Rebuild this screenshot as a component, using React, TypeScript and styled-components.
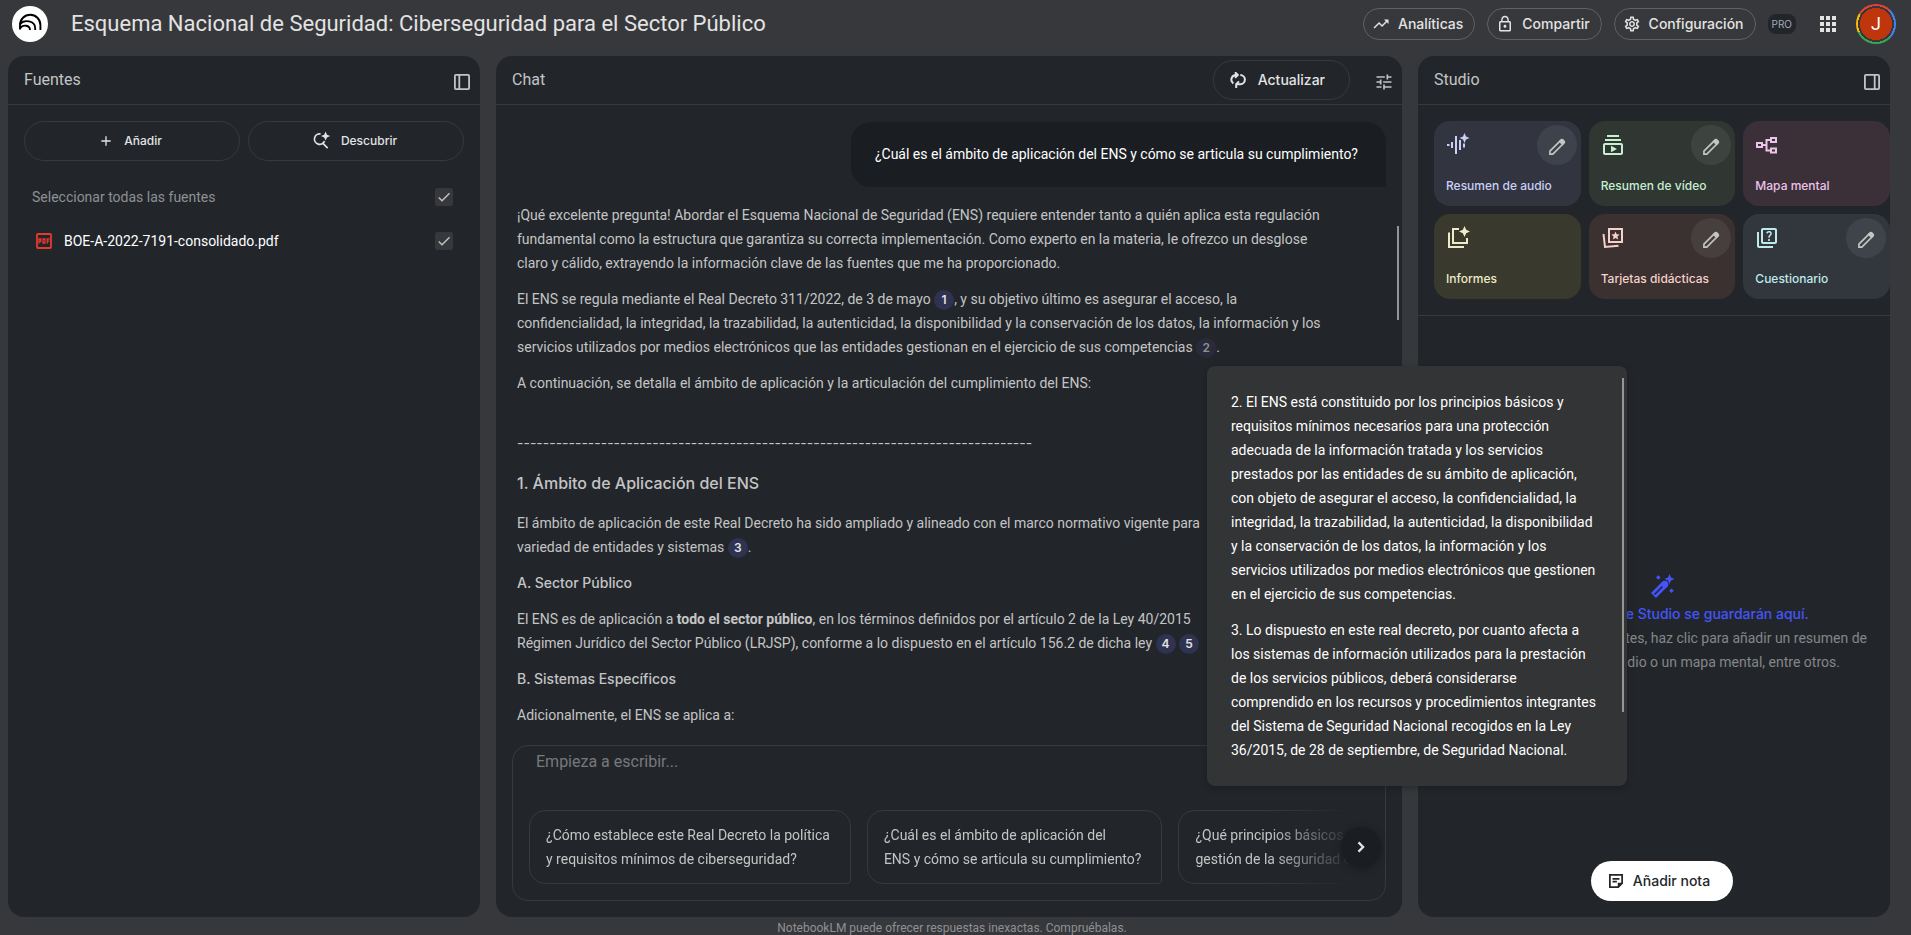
import React from "react";
import styled, { createGlobalStyle } from "styled-components";
import {
  MdAdd, MdApps, MdCheck, MdLockOutline, MdOutlineQuiz,
  MdOutlineSettings, MdOutlineSubscriptions, MdTrendingUp, MdTune,
} from "react-icons/md";

const c = {
  page: "#37383b",
  panel: "#22262b",
  deep: "#1a1e22",
  line: "#37393c",
  outline: "#5f6165",
  text: "#e3e3e3",
  body: "#c4c4c4",
  muted: "#8e9194",
};

const labelFont = `Inter, "Liberation Sans", sans-serif`;

const Global = createGlobalStyle`
  *, *::before, *::after { box-sizing: border-box; }
  html, body, #root { height: 100%; }
  body {
    margin: 0;
    background: ${c.page};
    color: ${c.text};
    font: 400 14px/24px Roboto, "Liberation Sans", sans-serif;
    overflow: hidden;
  }
  button, input, textarea { font: inherit; color: inherit; }
  button { cursor: pointer; }
  h1, h2, h3, h4, p { margin: 0; padding: 0; }
  svg { display: block; flex: none; }
`;

/* ---------- layout ---------- */

const Page = styled.div`
  display: flex;
  flex-direction: column;
  height: 100%;
`;

const TopBar = styled.header`
  display: flex;
  align-items: center;
  gap: 12px;
  height: 56px;
  padding: 0 15px 8px 12px;
`;

const Title = styled.h1`
  flex: 1;
  margin-left: 11px;
  font-size: 22px;
  font-weight: 400;
  line-height: 32px;
  white-space: nowrap;
`;

const Columns = styled.main`
  flex: 1;
  min-height: 0;
  display: grid;
  grid-template-columns: 236fr 453fr 236fr;
  gap: 16px;
  padding: 0 21px 0 8px;
`;

const Panel = styled.section`
  position: relative;
  display: flex;
  flex-direction: column;
  min-width: 0;
  min-height: 0;
  background: ${c.panel};
  border-radius: 16px;
`;

const PanelHeader = styled.div`
  display: flex;
  align-items: center;
  gap: 24px;
  height: 49px;
  padding: 0 8px 0 16px;
  border-bottom: 1px solid ${c.line};
`;

const PanelTitle = styled.h2`
  flex: 1;
  font-size: 16px;
  font-weight: 400;
  line-height: 24px;
  color: ${c.body};
`;

const Footer = styled.footer`
  height: 18px;
  font-size: 12px;
  line-height: 22px;
  text-align: center;
  color: ${c.muted};
  padding-right: 7px;
`;

/* ---------- controls ---------- */

const Pill = styled.button<{ $tall?: boolean }>`
  display: flex;
  align-items: center;
  justify-content: center;
  gap: ${(p) => (p.$tall ? 12 : 8)}px;
  height: ${(p) => (p.$tall ? 40 : 32)}px;
  padding: ${(p) => (p.$tall ? "0 24px 0 16px" : "0 11px 0 8px")};
  flex: none;
  border: 1px solid ${(p) => (p.$tall ? c.line : c.outline)};
  border-radius: 20px;
  background: none;
  font-family: ${labelFont};
  font-weight: 500;
  white-space: nowrap;
`;

const SourceButton = styled(Pill)`
  flex: 1 1 0;
  gap: 10px;
  padding: 0 20px 0 16px;
  font-size: 12px;
`;

const IconButton = styled.button`
  display: grid;
  place-items: center;
  width: 20px;
  height: 20px;
  margin-top: 4px;
  padding: 0;
  border: 0;
  background: none;
  color: ${c.body};
`;

const AppsButton = styled(IconButton)`
  width: 40px;
  height: 40px;
  margin: 0;
  color: ${c.text};
`;

const Tools = styled.div`
  display: flex;
  align-items: center;
`;

const ProBadge = styled.span`
  margin-right: 12px;
  padding: 0 4px;
  border-radius: 8px;
  background: ${c.panel};
  color: #a0aab8;
  font-family: ${labelFont};
  font-size: 10px;
  line-height: 20px;
`;

const Avatar = styled.button`
  display: grid;
  place-items: center;
  width: 40px;
  height: 40px;
  margin-left: 8px;
  padding: 4px;
  border: 0;
  border-radius: 50%;
  background:
    radial-gradient(circle, #bf360c 0 16px, ${c.page} 16px 18px, transparent 18px),
    conic-gradient(#ea4335 0 45deg, #4285f4 45deg 135deg, #34a853 135deg 245deg, #fbbc04 245deg 300deg, #ea4335 300deg);
  color: #fff;
  font-size: 18px;
`;

/* ---------- sources ---------- */

const SourceActions = styled.div`
  display: flex;
  gap: 8px;
  padding: 16px 16px 14px;
`;

const SourceRow = styled.label<{ $dim?: boolean }>`
  display: flex;
  align-items: center;
  gap: 12px;
  height: 44px;
  padding: 0 27px 0 ${(p) => (p.$dim ? 24 : 28)}px;
  color: ${(p) => (p.$dim ? c.muted : "#fff")};
`;

const RowName = styled.span`
  flex: 1;
`;

const CheckWrap = styled.span`
  position: relative;
  width: 18px;
  height: 18px;
  svg { position: absolute; inset: 1px; pointer-events: none; color: ${c.body}; }
`;

const CheckInput = styled.input`
  appearance: none;
  display: block;
  width: 18px;
  height: 18px;
  margin: 0;
  border-radius: 2px;
  background: ${c.page};
`;

/* ---------- chat ---------- */

const Messages = styled.div`
  flex: 1;
  min-height: 0;
  overflow: hidden;
  padding: 17px 16px 0;
`;

const Question = styled.div`
  width: fit-content;
  margin-left: auto;
  padding: 20px 28px 21px 24px;
  border-radius: 20px 20px 0 20px;
  background: ${c.deep};
  color: #fff;
`;

const Answer = styled.article`
  display: flex;
  flex-direction: column;
  gap: 12px;
  padding: 16px 5px 0;
  color: ${c.body};
  white-space: nowrap;
  h3, h4 { font-family: ${labelFont}; font-weight: 500; }
  h3 { font-size: 16px; padding: 4px 0; }
  h4 { font-size: 14px; }
`;

const Rule = styled.p`
  padding: 24px 0 0;
  font-family: ${labelFont};
`;

const Cite = styled.button<{ $active?: boolean }>`
  width: 20px;
  height: 20px;
  padding: 0;
  border: 0;
  border-radius: 50%;
  background: ${(p) => (p.$active ? "#292b3a" : "#2f3250")};
  color: ${(p) => (p.$active ? c.muted : c.text)};
  font-family: ${labelFont};
  font-size: 12px;
  font-weight: 600;
  line-height: 20px;
`;

const Thumb = styled.span`
  position: absolute;
  width: 2px;
  background: #959595;
`;

const ChatThumb = styled(Thumb)`
  right: 3px;
  top: 170px;
  height: 94px;
`;

const Composer = styled.form`
  position: relative;
  margin: 0 16px 16px;
  height: 156px;
  border: 1px solid ${c.line};
  border-radius: 16px;
  padding: 4px 4px 16px 16px;
  display: flex;
  flex-direction: column;
`;

const Prompt = styled.textarea`
  display: block;
  height: 60px;
  padding: 0 7px;
  border: 0;
  outline: 0;
  resize: none;
  background: none;
  font-size: 16px;
  line-height: 24px;
  &::placeholder { color: #77797b; opacity: 1; }
`;

const Suggestions = styled.div`
  display: flex;
  gap: 16px;
  overflow: hidden;
  mask-image: linear-gradient(90deg, #000 calc(100% - 112px), transparent calc(100% - 28px));
`;

const Suggestion = styled.button`
  flex: none;
  height: 74px;
  padding: 0 20px 0 16px;
  border: 1px solid ${c.line};
  border-radius: 16px 16px 4px 16px;
  background: none;
  color: ${c.body};
  text-align: left;
  white-space: nowrap;
`;

const NextButton = styled.button`
  position: absolute;
  right: 4px;
  bottom: 33px;
  display: grid;
  place-items: center;
  width: 40px;
  height: 40px;
  padding: 0;
  border: 0;
  border-radius: 50%;
  background: ${c.deep};
  box-shadow: 0 2px 8px rgba(0, 0, 0, 0.3);
`;

const Popover = styled.aside`
  position: absolute;
  z-index: 2;
  left: 711px;
  top: 310px;
  width: 420px;
  height: 420px;
  padding: 24px;
  display: flex;
  flex-direction: column;
  gap: 12px;
  border-radius: 8px;
  background: #333435;
  box-shadow: 0 2px 6px rgba(0, 0, 0, 0.25);
  color: #fff;
  white-space: nowrap;
`;

const PopoverThumb = styled(Thumb)`
  right: 3px;
  top: 12px;
  height: 334px;
`;

/* ---------- studio ---------- */

const Tiles = styled.div`
  display: grid;
  grid-template-columns: repeat(3, 1fr);
  gap: 8px;
  padding: 16px 0 16px 16px;
  border-bottom: 1px solid ${c.line};
`;

const Tile = styled.div<{ $bg: string; $fg: string }>`
  display: grid;
  grid-template-columns: 1fr auto;
  height: 85px;
  padding: 4px 4px 8px 12px;
  border-radius: 16px;
  background: ${(p) => p.$bg};
  color: ${(p) => p.$fg};
`;

const TileIcon = styled.span`
  margin-top: 8px;
`;

const TileName = styled.button`
  grid-column: 1 / -1;
  align-self: end;
  padding: 0;
  border: 0;
  background: none;
  color: inherit;
  font-family: ${labelFont};
  font-size: 12px;
  font-weight: 500;
  line-height: 24px;
  text-align: left;
`;

const EditButton = styled.button`
  display: grid;
  place-items: center;
  width: 40px;
  height: 40px;
  padding: 4px 0 0;
  border: 0;
  border-radius: 50%;
  background: rgba(128, 134, 139, 0.16);
  color: ${c.body};
`;

const Empty = styled.div`
  flex: 1;
  display: flex;
  flex-direction: column;
  align-items: center;
  padding-top: 258px;
  padding-left: 16px;
  text-align: center;
  color: #848688;
  white-space: nowrap;
`;

const EmptyTitle = styled.p`
  margin-top: 3px;
  color: #4355fa;
  font-family: ${labelFont};
  font-weight: 500;
`;

const NoteButton = styled.button`
  display: flex;
  align-items: center;
  gap: 10px;
  align-self: center;
  height: 40px;
  margin: 0 0 16px 16px;
  padding: 0 23px 0 18px;
  border: 0;
  border-radius: 20px;
  background: #fff;
  color: ${c.panel};
  font-family: ${labelFont};
  font-weight: 500;
`;

/* ---------- drawings ---------- */

const star = (x: number, y: number, r: number) =>
  `M${x} ${y - r}l${r * 0.3} ${r * 0.7}l${r * 0.7} ${r * 0.3}l${-r * 0.7} ${r * 0.3}l${-r * 0.3} ${r * 0.7}l${-r * 0.3} ${-r * 0.7}l${-r * 0.7} ${-r * 0.3}l${r * 0.7} ${-r * 0.3}z`;

type Draw = { size?: number; children: React.ReactNode };
const Stroke = ({ size = 24, children }: Draw) => (
  <svg width={size} height={size} viewBox="0 0 24 24" fill="none" stroke="currentColor" strokeWidth="2" aria-hidden="true">
    {children}
  </svg>
);

const Logo = () => (
  <svg width="36" height="36" viewBox="0 0 36 36" aria-hidden="true">
    <circle cx="18" cy="18" r="18" fill="#fff" />
    <g fill="none" stroke="#000" strokeWidth="1.9">
      <path d="M8 23.5V19a10.2 10.2 0 0 1 20.4 0v5" />
      <path d="M8 18.2c4-5.2 15.2-3.6 15.2 4V24" />
      <path d="M8 22.5c3-4.6 10-3.3 10 1.5" />
    </g>
  </svg>
);

const PanelIcon = ({ right }: { right?: boolean }) => (
  <svg width="16" height="16" viewBox="0 0 16 16" fill="none" stroke="currentColor" strokeWidth="1.8" aria-hidden="true">
    <rect x="0.9" y="0.9" width="14.2" height="14.2" rx="1" />
    <path d={right ? "M10.7 1v14" : "M5.3 1v14"} />
  </svg>
);

const DiscoverIcon = () => (
  <Stroke size={20}>
    <path d="M11.5 3.5a6.3 6.3 0 1 0 4.8 8.5M13.5 14l6.500 6.500" />
    <path d={star(17.5, 6, 5.5)} fill="currentColor" stroke="none" />
  </Stroke>
);

const RefreshIcon = () => (
  <svg width="16" height="16" viewBox="0 0 16 16" fill="none" stroke="currentColor" strokeWidth="2" aria-hidden="true">
    <path d="M3.400 11.500A4.700 4.700 0 0 1 5.400 3H7M5 .2 7.800 3 5 5.800" />
    <path d="M10.300 3a4.600 4.600 0 0 1 0 9.200H6M9 9.400 6.200 12.200V16" />
  </svg>
);

const PdfIcon = () => (
  <svg width="16" height="16" viewBox="0 0 16 16" fill="none" stroke="#e8392f" aria-hidden="true">
    <rect x="1" y="1" width="14" height="14" rx="1" strokeWidth="1.8" />
    <path strokeWidth="1.3" d="M3 10.500V6h1.800v2.500H3M7 6v4h1.900V6zM11.300 10.500V6h2.200M11.300 8.200h2" />
  </svg>
);

const AudioIcon = () => (
  <Stroke>
    <path d="M1 12h2.500M6 9v6M10 3v18M14 7v10M18 10.500v4" />
    <path d={star(18.5, 5, 5)} fill="currentColor" stroke="none" />
  </Stroke>
);

const MindIcon = () => (
  <Stroke>
    <path d="M2 10h5v4H2zM16 5h5v4h-5zM16 15.500h5v4h-5zM7 12h4.500M16 7h-4.500v10.500H16" />
  </Stroke>
);

const ReportIcon = () => (
  <Stroke>
    <path d="M13 3H7v14h14v-5M3 6.500V21h15" />
    <path d={star(18.5, 5.5, 5.5)} fill="currentColor" stroke="none" />
  </Stroke>
);

const CardsIcon = () => (
  <Stroke>
    <path d="M8 3h13v13H8zM2.500 8l1.500 13 13.500-1.300" />
    <path d="m14.500 5.500 1.200 2.800 3 .2-2.300 2 .8 3-2.700-1.600-2.700 1.600.8-3-2.300-2 3-.2z" fill="currentColor" stroke="none" />
  </Stroke>
);

const EditIcon = () => (
  <svg width="20" height="20" viewBox="0 0 24 24" fill="none" stroke="currentColor" strokeWidth="2" aria-hidden="true">
    <path d="M3.500 17 16.800 3.700a1.600 1.600 0 0 1 2.300 0l1.200 1.200a1.600 1.600 0 0 1 0 2.300L7 20.500H3.500z" />
    <path d="m15.200 5.300 3.500 3.500 2-2.500-3-3z" fill="currentColor" />
  </svg>
);

const WandIcon = () => (
  <svg width="25" height="25" viewBox="0 0 25 25" fill="#4355fa" aria-hidden="true">
    <path d="M3.500 21.500 14.500 10.500" fill="none" stroke="#4355fa" strokeWidth="7" />
    <circle cx="14.800" cy="10.200" r="3.500" />
    <path d="M4.500 20.500 12.500 12.500" fill="none" stroke={c.panel} strokeWidth="1.6" />
    <path d={star(19.5, 5, 5)} />
    <path d="m8.300 1.200 2.300 2.300-2.300 2.300L6 3.500zM21.500 14.400l2.300 2.300-2.300 2.300-2.300-2.300z" />
  </svg>
);

const NoteIcon = () => (
  <svg width="14" height="14" viewBox="0 0 16 16" fill="none" stroke="currentColor" strokeWidth="2" aria-hidden="true">
    <path d="M10.500 15H1V1h14v9.500zM4 5.500h8M4 8.800h5" />
    <path d="M16 10h-6v6z" fill="currentColor" stroke="none" />
  </svg>
);

/* ---------- page ---------- */

const tiles = [
  { name: "Resumen de audio", bg: "#32353f", fg: "#c9cff8", icon: <AudioIcon />, edit: true },
  { name: "Resumen de vídeo", bg: "#303632", fg: "#c5efcf", icon: <MdOutlineSubscriptions size={24} />, edit: true },
  { name: "Mapa mental", bg: "#3b3038", fg: "#ecc3ea", icon: <MindIcon />, edit: false },
  { name: "Informes", bg: "#39392e", fg: "#eeecc6", icon: <ReportIcon />, edit: false },
  { name: "Tarjetas didácticas", bg: "#3b3130", fg: "#f6d0ca", icon: <CardsIcon />, edit: true },
  { name: "Cuestionario", bg: "#32373e", fg: "#bfe9ec", icon: <MdOutlineQuiz size={24} />, edit: true },
];

const Check = ({ label }: { label: string }) => (
  <CheckWrap>
    <CheckInput type="checkbox" defaultChecked aria-label={label} />
    <MdCheck size={16} />
  </CheckWrap>
);

export default function App() {
  return (
    <Page>
      <Global />
      <TopBar>
        <Logo />
        <Title>Esquema Nacional de Seguridad: Ciberseguridad para el Sector Público</Title>
        <Pill><MdTrendingUp size={18} />Analíticas</Pill>
        <Pill><MdLockOutline size={18} />Compartir</Pill>
        <Pill><MdOutlineSettings size={18} />Configuración</Pill>
        <Tools>
          <ProBadge>PRO</ProBadge>
          <AppsButton aria-label="Aplicaciones"><MdApps size={24} /></AppsButton>
          <Avatar aria-label="Cuenta">J</Avatar>
        </Tools>
      </TopBar>

      <Columns>
        <Panel>
          <PanelHeader>
            <PanelTitle>Fuentes</PanelTitle>
            <IconButton aria-label="Contraer fuentes"><PanelIcon /></IconButton>
          </PanelHeader>
          <SourceActions>
            <SourceButton $tall><MdAdd size={16} />Añadir</SourceButton>
            <SourceButton $tall><DiscoverIcon />Descubrir</SourceButton>
          </SourceActions>
          <SourceRow $dim>
            <RowName>Seleccionar todas las fuentes</RowName>
            <Check label="Seleccionar todas las fuentes" />
          </SourceRow>
          <SourceRow>
            <PdfIcon />
            <RowName>BOE-A-2022-7191-consolidado.pdf</RowName>
            <Check label="BOE-A-2022-7191-consolidado.pdf" />
          </SourceRow>
        </Panel>

        <Panel>
          <PanelHeader>
            <PanelTitle>Chat</PanelTitle>
            <Pill $tall><RefreshIcon />Actualizar</Pill>
            <IconButton aria-label="Ajustes del chat"><MdTune size={20} /></IconButton>
          </PanelHeader>
          <Messages>
            <Question>¿Cuál es el ámbito de aplicación del ENS y cómo se articula su cumplimiento?</Question>
            <Answer>
              <p>
                ¡Qué excelente pregunta! Abordar el Esquema Nacional de Seguridad (ENS) requiere entender tanto a quién aplica esta regulación<br />
                fundamental como la estructura que garantiza su correcta implementación. Como experto en la materia, le ofrezco un desglose<br />
                claro y cálido, extrayendo la información clave de las fuentes que me ha proporcionado.
              </p>
              <p>
                El ENS se regula mediante el Real Decreto 311/2022, de 3 de mayo <Cite>1</Cite>, y su objetivo último es asegurar el acceso, la<br />
                confidencialidad, la integridad, la trazabilidad, la autenticidad, la disponibilidad y la conservación de los datos, la información y los<br />
                servicios utilizados por medios electrónicos que las entidades gestionan en el ejercicio de sus competencias <Cite $active>2</Cite>.
              </p>
              <p>A continuación, se detalla el ámbito de aplicación y la articulación del cumplimiento del ENS:</p>
              <Rule>--------------------------------------------------------------------------------</Rule>
              <h3>1. Ámbito de Aplicación del ENS</h3>
              <p>
                El ámbito de aplicación de este Real Decreto ha sido ampliado y alineado con el marco normativo vigente para<br />
                variedad de entidades y sistemas <Cite>3</Cite>.
              </p>
              <h4>A. Sector Público</h4>
              <p>
                El ENS es de aplicación a <b>todo el sector público</b>, en los términos definidos por el artículo 2 de la Ley 40/2015<br />
                Régimen Jurídico del Sector Público (LRJSP), conforme a lo dispuesto en el artículo 156.2 de dicha ley <Cite>4</Cite> <Cite>5</Cite>
              </p>
              <h4>B. Sistemas Específicos</h4>
              <p>Adicionalmente, el ENS se aplica a:</p>
            </Answer>
          </Messages>
          <ChatThumb />
          <Composer>
            <Prompt placeholder="Empieza a escribir..." aria-label="Mensaje" />
            <Suggestions>
              <Suggestion type="button">¿Cómo establece este Real Decreto la política<br />y requisitos mínimos de ciberseguridad?</Suggestion>
              <Suggestion type="button">¿Cuál es el ámbito de aplicación del<br />ENS y cómo se articula su cumplimiento?</Suggestion>
              <Suggestion type="button">¿Qué principios básicos rigen la<br />gestión de la seguridad en el ENS?</Suggestion>
            </Suggestions>
            <NextButton type="button" aria-label="Siguiente">
              <Stroke size={20}><path strokeWidth="2.8" d="m9 6.500 5.500 5.500L9 17.500" /></Stroke>
            </NextButton>
          </Composer>
          <Popover>
            <p>
              2. El ENS está constituido por los principios básicos y<br />
              requisitos mínimos necesarios para una protección<br />
              adecuada de la información tratada y los servicios<br />
              prestados por las entidades de su ámbito de aplicación,<br />
              con objeto de asegurar el acceso, la confidencialidad, la<br />
              integridad, la trazabilidad, la autenticidad, la disponibilidad<br />
              y la conservación de los datos, la información y los<br />
              servicios utilizados por medios electrónicos que gestionen<br />
              en el ejercicio de sus competencias.
            </p>
            <p>
              3. Lo dispuesto en este real decreto, por cuanto afecta a<br />
              los sistemas de información utilizados para la prestación<br />
              de los servicios públicos, deberá considerarse<br />
              comprendido en los recursos y procedimientos integrantes<br />
              del Sistema de Seguridad Nacional recogidos en la Ley<br />
              36/2015, de 28 de septiembre, de Seguridad Nacional.
            </p>
            <PopoverThumb />
          </Popover>
        </Panel>

        <Panel>
          <PanelHeader>
            <PanelTitle>Studio</PanelTitle>
            <IconButton aria-label="Contraer Studio"><PanelIcon right /></IconButton>
          </PanelHeader>
          <Tiles>
            {tiles.map((t) => (
              <Tile key={t.name} $bg={t.bg} $fg={t.fg}>
                <TileIcon>{t.icon}</TileIcon>
                {t.edit && <EditButton aria-label={`Personalizar ${t.name}`}><EditIcon /></EditButton>}
                <TileName>{t.name}</TileName>
              </Tile>
            ))}
          </Tiles>
          <Empty>
            <WandIcon />
            <EmptyTitle>Los resultados de Studio se guardarán aquí.</EmptyTitle>
            <p>
              Después de añadir las fuentes, haz clic para añadir un resumen de<br />
              audio, una guía de estudio o un mapa mental, entre otros.
            </p>
          </Empty>
          <NoteButton><NoteIcon />Añadir nota</NoteButton>
        </Panel>
      </Columns>
      <Footer>NotebookLM puede ofrecer respuestas inexactas. Compruébalas.</Footer>
    </Page>
  );
}
